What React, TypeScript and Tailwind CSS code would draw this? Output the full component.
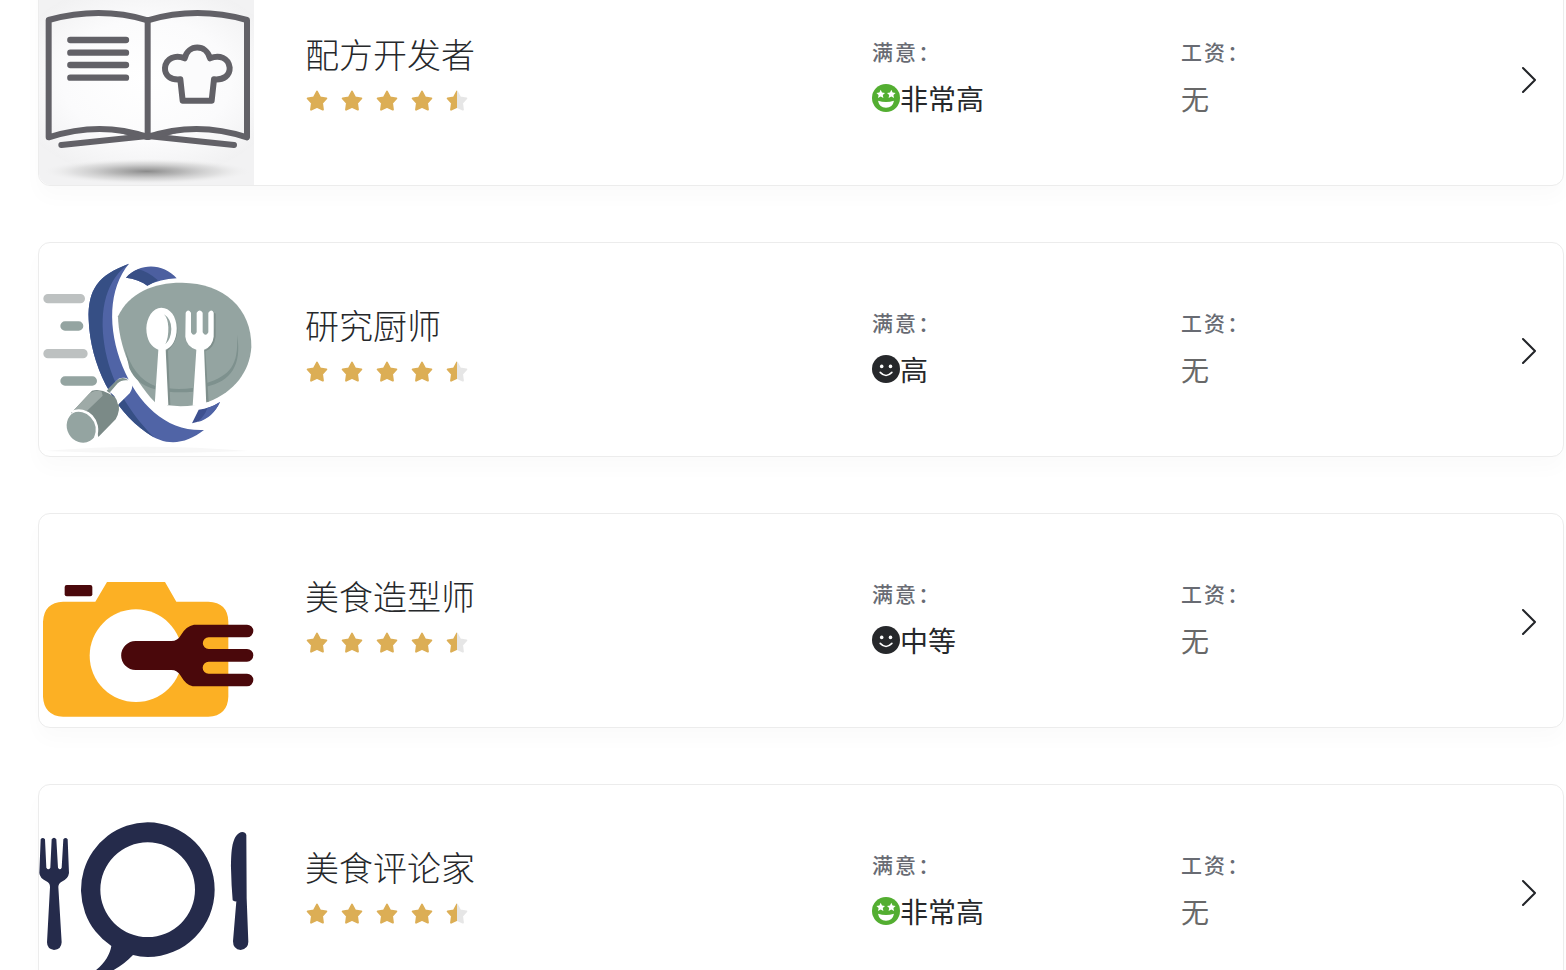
import React from 'react';

const STAR = 'M11 1.6 L14.1 7.4 L20.3 8.4 L16 13 L16.9 19.6 L11 16.9 L5.1 19.6 L6 13 L1.7 8.4 L7.9 7.4 Z';

function RecipeBook() {
  return (
    <svg viewBox="27 -84 645 639" className="h-full w-full" aria-hidden="true">
      <defs>
        <radialGradient id="page">
          <stop offset="0" stopColor="#ffffff" />
          <stop offset="0.6" stopColor="#fbfbfc" />
          <stop offset="1" stopColor="#f1f1f2" />
        </radialGradient>
        <radialGradient id="shade">
          <stop offset="0" stopColor="#8a8a8a" />
          <stop offset="0.35" stopColor="#a9a9a9" stopOpacity="0.8" />
          <stop offset="0.7" stopColor="#cccccc" stopOpacity="0.5" />
          <stop offset="1" stopColor="#eeeeee" stopOpacity="0" />
        </radialGradient>
      </defs>
      <rect x="27" y="-84" width="648" height="639" fill="#f2f2f3" />
      <ellipse cx="350" cy="240" rx="420" ry="300" fill="url(#page)" />
      <ellipse cx="350" cy="514" rx="310" ry="38" fill="url(#shade)" />
      <g fill="none" stroke="#626167" strokeWidth="18" strokeLinecap="round" strokeLinejoin="round">
        <path d="M353 61 Q210 18 56 60 V412 Q210 362 353 411 Q500 362 651 412 V60 Q500 18 353 61 Z" />
        <path d="M353 61 V411" />
        <path d="M94 435 L353 408 L612 435" />
      </g>
      <path d="M270 400 L353 398 L440 400 L353 420 Z" fill="#626167" />
      <g stroke="#626167" strokeWidth="19" strokeLinecap="round">
        <path d="M121 120 H288 M121 158 H288 M121 195 H288 M121 233 H288" />
      </g>
      <path
        d="M458 302 L451 238 C422 241 404 226 405 204 C407 174 437 163 464 175 C474 132 529 132 540 175 C568 163 596 174 599 203 C600 226 581 241 552 238 L545 302 Z"
        fill="#fbfbfc"
        stroke="#626167"
        strokeWidth="18"
        strokeLinejoin="round"
      />
    </svg>
  );
}

function SearchPlate() {
  return (
    <svg viewBox="27 24 645 639" className="h-full w-full" aria-hidden="true">
      <g strokeLinecap="round" strokeWidth="28">
        <path d="M54 191 H151 M54 356 H159" stroke="#bdc1c1" />
        <path d="M105 273 H146 M105 438 H187" stroke="#94a4a1" />
      </g>
      <path d="M288 128 C330 82 400 84 440 130 Q390 132 352 152 Q325 132 288 128 Z" fill="#4c5fa0" />
      <path d="M288 128 Q306 108 326 103 Q352 109 384 136 L352 152 Q325 132 288 128 Z" fill="#384f86" />
      <path d="M486 565 L506 524 Q540 520 570 501 Q548 550 486 565 Z" fill="#3d5090" />
      <path d="M532 519 Q553 513 570 501 Q548 550 503 561 Q525 542 532 519 Z" fill="#4f63a6" />
      <path d="M297 86 C205 120 173 162 176 254 C181 390 249 522 350 593 C405 634 465 630 522 585 C410 590 325 509 278 395 C232 280 235 161 297 86 Z" fill="#5064a6" />
      <path d="M297 86 C205 120 173 162 176 254 C181 390 249 522 350 593 L372 607 C310 545 255 465 231 369 C206 260 215 165 276 103 Z" fill="#364f85" />
      <path d="M264 244 C297 172 374 142 457 143 C580 145 666 218 664 337 C659 410 613 471 536 500 Q454 526 375 502 C304 430 266 330 264 244 Z" fill="#94a4a1" />
      <path d="M284 337 Q310 430 376 453 L376 463 Q320 450 298 400 Z M414 460 Q450 464 489 459 V470 Q450 474 414 470 Z M528 445 C602 421 626 390 621 300 C637 390 602 440 529 455 Z" fill="#7e918e" />
      <path d="M408 347 Q450 310 440 252 Q452 310 414 347 L421 510 H412 Z M524 347 Q560 327 551 232 L557 236 V305 Q552 340 526 349 L536 500 H528 Z" fill="#7f8f8c" />
      <path d="M394 218 C368 218 350 248 349 280 C349 316 365 338 385 344 L374 510 H415 L407 344 C426 338 440 315 440 280 C440 244 420 218 394 218 Z" fill="#fff" />
      <path d="M402 238 Q424 252 424 282 Q423 313 406 328 Q416 307 415 277 Q414 251 402 238 Z" fill="#94a4a1" />
      <path d="M467 233 Q474 220 483 233 V292 Q491 307 500 292 V233 Q509 220 518 233 V292 Q527 307 535 292 V233 Q545 220 551 233 V305 Q548 334 522 344 L529 512 H488 L499 344 Q469 334 466 305 Z" fill="#fff" />
      <path d="M238 476 Q212 461 186 467 L123 535 Q185 520 205 606 L257 553 Q273 525 264 492 Z" fill="#7b8a87" />
      <path d="M215 470 Q195 461 176 478 L123 535 Q143 525 165 533 L218 482 Z" fill="#9eaaa7" />
      <path d="M230 467 L266 431 C295 420 320 447 299 475 L264 509 Q259 478 230 467 Z" fill="#fff" />
      <path d="M230 467 L262 434 Q280 423 295 436 Q275 433 263 445 L238 474 Z" fill="#7f918d" />
      <ellipse cx="156" cy="575" rx="45" ry="49" transform="rotate(-30 156 575)" fill="#94a4a1" />
      <path d="M126 531 C169 512 216 558 196 609" fill="none" stroke="#fff" strokeWidth="8" />
      <path d="M45 648 Q340 622 655 648 Q340 661 45 648 Z" fill="#f7f7f7" />
    </svg>
  );
}

function FoodCamera() {
  return (
    <svg viewBox="27 27 645 639" className="h-full w-full" aria-hidden="true">
      <rect x="104" y="240" width="83" height="34" rx="6" fill="#4a080b" />
      <path d="M99 290 H196 L231 231 H405 L439 290 H535 Q594 292 595 350 V575 Q593 632 535 635 H99 Q42 632 39 575 V350 Q42 292 99 290 Z" fill="#fcb024" />
      <ellipse cx="318" cy="452" rx="139" ry="139" fill="#fff" />
      <path d="M317 408 H424 Q443 408 453 390 Q468 363 492 359 H651 A19 19 0 0 1 651 397 H536 A17 17 0 0 0 536 432 H651 A19 19 0 0 1 651 470 H536 A17 17 0 0 0 536 506 H651 A19 19 0 0 1 651 544 H488 Q468 540 452 512 Q442 495 424 495 H317 A43 43 0 0 1 317 408 Z" fill="#4a080b" />
    </svg>
  );
}

function SpeechPlate() {
  return (
    <svg viewBox="27 30 645 639" className="h-full w-full" fill="#252b4b" aria-hidden="true">
      <path d="M32 193 Q38 185 45 193 L49 278 Q55 288 61 278 L65 193 Q72 184 79 193 L84 278 Q90 288 95 278 L100 193 Q107 185 113 193 L117 294 Q115 311 95 320 Q85 325 85 336 L95 502 Q94 524 72 525 Q51 522 51 502 L60 336 Q60 324 49 319 Q29 309 28 294 Z" />
      <path fillRule="evenodd" d="M353 142 A201 202 0 0 1 353 546 Q330 546 309 540 C273 578 228 605 165 607 C215 580 239 545 244 513 A201 202 0 0 1 353 142 Z M353 202 A142 142 0 1 0 353 486 A142 142 0 1 0 353 202 Z" />
      <path d="M649 180 Q645 169 632 172 C602 184 604 243 603 280 Q604 330 608 376 Q612 380 619 379 L609 499 Q609 523 632 525 Q655 521 655 500 L650 370 Z" />
    </svg>
  );
}

function Stars() {
  return (
    <div className="flex gap-[13px] pl-px" role="img" aria-label="4.5 / 5">
      {[1, 2, 3, 4].map((n) => (
        <svg key={n} viewBox="0 0 22 22" className="size-[22px]">
          <path d={STAR} fill="#dcae55" stroke="#dcae55" strokeWidth="2" strokeLinejoin="round" />
        </svg>
      ))}
      <svg viewBox="0 0 22 22" className="size-[22px]">
        <defs>
          <linearGradient id="half">
            <stop offset="0.5" stopColor="#dcae55" />
            <stop offset="0.5" stopColor="#e6e6e6" />
          </linearGradient>
        </defs>
        <path d={STAR} fill="url(#half)" stroke="url(#half)" strokeWidth="2" strokeLinejoin="round" />
      </svg>
    </div>
  );
}

function Face({ happy }: { happy: boolean }) {
  if (happy) {
    return (
      <svg viewBox="0 0 28 28" className="size-7 shrink-0" aria-hidden="true">
        <circle cx="14" cy="14" r="14" fill="#53ae31" />
        <path d="M8.7 5.8 l1.3 2.8 3 .3 -2.2 2.1 .6 3 -2.7-1.5 -2.7 1.5 .6-3 -2.2-2.1 3-.3 Z M19.3 5.8 l1.3 2.8 3 .3 -2.2 2.1 .6 3 -2.7-1.5 -2.7 1.5 .6-3 -2.2-2.1 3-.3 Z" fill="#fff" />
        <path d="M6 16.8 Q14 19.3 22 16.8 Q20.8 23.6 14 23.7 Q7.2 23.6 6 16.8 Z" fill="#fff" />
      </svg>
    );
  }
  return (
    <svg viewBox="0 0 28 28" className="size-7 shrink-0" aria-hidden="true">
      <circle cx="14" cy="14" r="14" fill="#26282b" />
      <circle cx="9.7" cy="11.4" r="1.8" fill="#fff" />
      <circle cx="18.5" cy="11.4" r="1.8" fill="#fff" />
      <path d="M8.2 17.4 Q14 23.5 19.9 17.4" fill="none" stroke="#fff" strokeWidth="1.6" strokeLinecap="round" />
    </svg>
  );
}

const careers = [
  { title: '配方开发者', level: '非常高', happy: true, Picture: RecipeBook },
  { title: '研究厨师', level: '高', happy: false, Picture: SearchPlate },
  { title: '美食造型师', level: '中等', happy: false, Picture: FoodCamera },
  { title: '美食评论家', level: '非常高', happy: true, Picture: SpeechPlate },
];

function App() {
  return (
    <main className="h-screen overflow-hidden bg-white font-['Noto_Sans_CJK_SC',sans-serif]">
      <div className="-mt-[29px] flex flex-col gap-14 pl-[38px] pr-0.5">
        {careers.map(({ title, level, happy, Picture }) => (
          <article key={title} className="flex items-center rounded-xl border border-[#ececec] bg-white shadow-[0_12px_20px_rgba(0,0,0,0.02)]">
            <div className="h-[213px] w-[215px] shrink-0 overflow-hidden rounded-l-xl">
              <Picture />
            </div>

            {/* Title and rating */}
            <div className="flex flex-1 flex-col gap-3 pb-4 pl-[51px]">
              <h2 className="text-[34px] leading-[48px] font-light text-[#26282b]">{title}</h2>
              <Stars />
            </div>

            <div className="w-[309px] shrink-0 pb-1">
              <p className="mb-3 text-[21px] leading-[30px] font-medium tracking-widest text-[#686b73]">满意：</p>
              <p className="flex items-center text-[28px] leading-10 text-[#26282b]">
                <Face happy={happy} />
                {level}
              </p>
            </div>

            <div className="w-[309px] shrink-0 pb-1">
              <p className="mb-3 text-[21px] leading-[30px] font-medium tracking-widest text-[#686b73]">工资：</p>
              <p className="text-[28px] leading-10 text-[#686868]">无</p>
            </div>

            <a href="#" aria-label={title} className="flex w-[73px] shrink-0 justify-center pl-1">
              <svg viewBox="0 0 28 28" className="size-7" fill="none" stroke="#222428" strokeWidth="2" strokeLinecap="round" strokeLinejoin="round">
                <path d="M8 3 L20 15 L8 27" />
              </svg>
            </a>
          </article>
        ))}
      </div>
    </main>
  );
}

export default App;
